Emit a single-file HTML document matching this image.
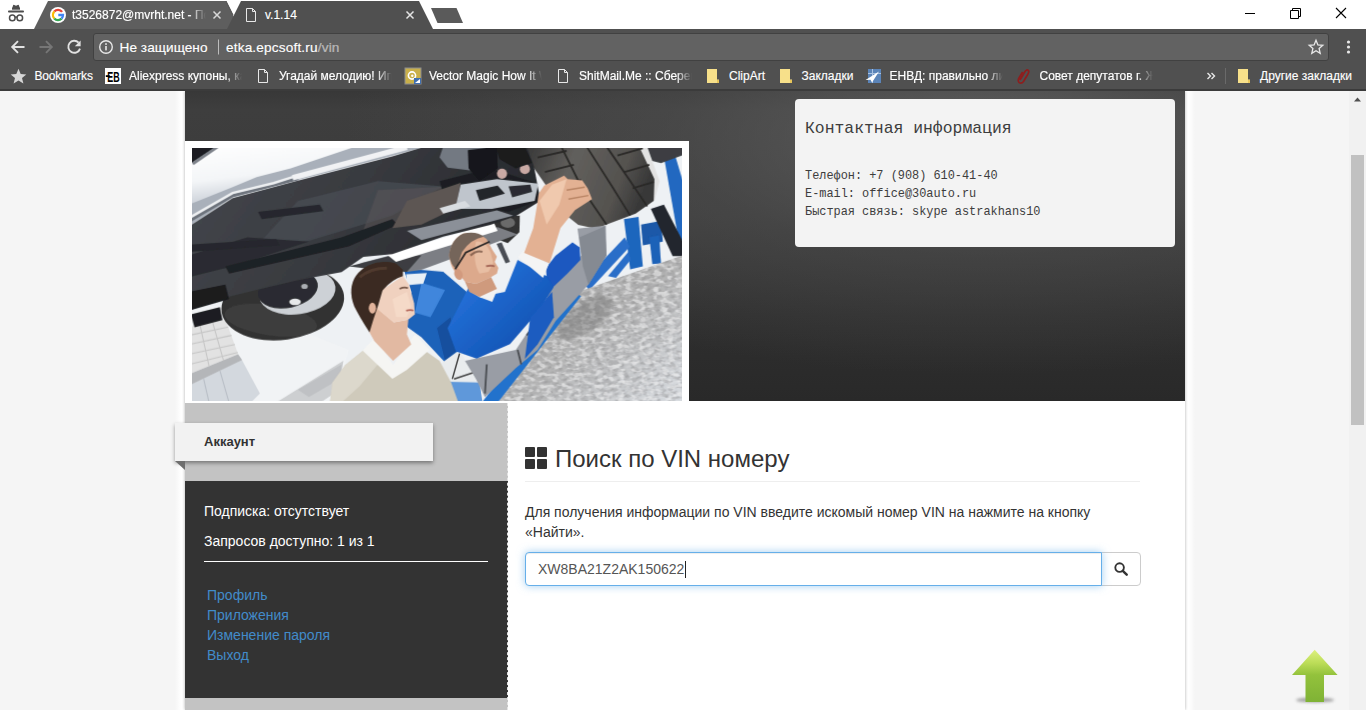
<!DOCTYPE html>
<html lang="ru">
<head>
<meta charset="utf-8">
<title>v.1.14</title>
<style>
*{box-sizing:border-box;margin:0;padding:0}
html,body{width:1366px;height:710px;overflow:hidden;background:#f5f5f5;font-family:"Liberation Sans",sans-serif;}
.abs{position:absolute}
#chrome{position:absolute;left:0;top:0;width:1366px;height:91px;background:#fff;z-index:50;overflow:hidden}
#toolbar{position:absolute;left:0;top:29px;width:1366px;height:61px;background:#505050}
#chromeborder{position:absolute;left:0;top:89px;width:1366px;height:2px;background:#3b3b3b}
#urlbox{position:absolute;left:93px;top:33px;width:1236px;height:28px;background:#626262;border:1px solid #414141;border-radius:3px}
.ct{position:absolute;color:#fff;-webkit-text-stroke:.2px rgba(255,255,255,.85);font-size:12px;line-height:16px;white-space:nowrap;font-family:"Liberation Sans",sans-serif}
.bm{top:68px}
.fade{width:113px;overflow:hidden;-webkit-mask-image:linear-gradient(90deg,#000 86%,transparent 100%);mask-image:linear-gradient(90deg,#000 86%,transparent 100%)}
#ph{position:absolute;left:7px;top:7px;display:block}
#page{position:absolute;left:0;top:91px;width:1349px;height:619px;background:#f5f5f5;overflow:hidden}
#scroll{position:absolute;left:1349px;top:91px;width:17px;height:619px;background:#f1f1f1}
#thumb{position:absolute;left:2px;top:64px;width:13px;height:270px;background:#c1c1c1}
#glow{position:absolute;left:175px;top:0;width:1020px;height:619px;background:linear-gradient(90deg,rgba(255,255,255,0) 0,#fff 6px,#fff 1014px,rgba(255,255,255,0) 1020px)}
#wrap{position:absolute;left:185px;top:0;width:1000px;height:619px;background:#fff;box-shadow:0 0 3px rgba(0,0,0,.32)}
#header{position:absolute;left:0;top:0;width:1000px;height:310px;background:radial-gradient(ellipse 640px 240px at 80% 14%,rgba(100,100,100,.8) 0%,rgba(84,84,84,.42) 50%,rgba(60,60,60,0) 100%),linear-gradient(180deg,#383838 0%,#3e3e3e 6%,#3b3b3b 40%,#2f2f2f 72%,#292929 100%)}
#contact{position:absolute;left:610px;top:8px;width:380px;height:148px;background:#f3f3f3;border-radius:4px;font-family:"Liberation Mono",monospace;color:#3d3d3d}
#contact h3{position:absolute;left:10px;top:18px;font-weight:normal;font-size:16.4px;line-height:24px;white-space:nowrap}
#contact p{position:absolute;left:10px;font-size:11.9px;line-height:18px;white-space:nowrap}
#photo{position:absolute;left:0;top:50px;width:504px;height:262px;background:#fff;z-index:2}
#side{position:absolute;left:0;top:312px;width:323px;height:307px;background:#c3c3c3}
#dash{position:absolute;left:322px;top:312px;width:0;height:307px;border-left:1px dashed #e4e4e4;z-index:3}
#sidedark{position:absolute;left:0;top:78px;width:323px;height:217px;background:#333}
#ribbon{position:absolute;left:-10px;top:20px;width:258px;height:38px;background:#f2f2f2;box-shadow:0 2px 4px rgba(0,0,0,.4)}
#ribbon b{position:absolute;left:29px;top:11px;font-size:13px;line-height:16px;color:#333}
#fold{position:absolute;left:-10px;top:58px;width:0;height:0;border-top:9px solid #6e6e6e;border-left:10px solid transparent}
.sw{position:absolute;left:19px;color:#fff;font-size:14px;line-height:20px;white-space:nowrap}
.sl{position:absolute;left:22px;color:#428bca;font-size:14px;line-height:20px;white-space:nowrap}
#main{position:absolute;left:323px;top:310px;width:677px;height:309px;background:#fff}
#h2{position:absolute;left:47px;top:44px;font-size:24px;line-height:28px;color:#333;white-space:nowrap}
#hr{position:absolute;left:17px;top:80px;width:615px;height:1px;background:#eee}
#desc{position:absolute;left:17px;top:101px;width:620px;font-size:14px;line-height:20px;color:#333;letter-spacing:0}
#inp{z-index:2;background:#fff;position:absolute;left:17px;top:151px;width:577px;height:34px;border:1px solid #66afe9;border-radius:4px 0 0 4px;box-shadow:inset 0 1px 1px rgba(0,0,0,.075),0 0 8px rgba(102,175,233,.6);font-size:14px;line-height:32px;padding-left:12px;color:#555}
#btn{position:absolute;left:593px;top:151px;width:40px;height:34px;border:1px solid #ccc;border-radius:0 4px 4px 0;background:#fff}
</style>
</head>
<body>
<div id="page">
  <div id="glow"></div>
  <div id="wrap">
    <div id="header">
      <div id="photo"><svg id="ph" width="490" height="253" viewBox="0 0 1366 705" preserveAspectRatio="none">
<defs>
<linearGradient id="gSil" x1="0" y1="0" x2="0.35" y2="1"><stop offset="0" stop-color="#ffffff"/><stop offset="0.55" stop-color="#f4f6f8"/><stop offset="0.85" stop-color="#d2d7de"/><stop offset="1" stop-color="#a9b0ba"/></linearGradient>
<linearGradient id="gUnder" x1="0" y1="0" x2="1" y2="0.3"><stop offset="0" stop-color="#45484d"/><stop offset="0.5" stop-color="#393b40"/><stop offset="1" stop-color="#26282c"/></linearGradient>
<linearGradient id="gTire" x1="0" y1="0" x2="1" y2="0.25"><stop offset="0" stop-color="#343434"/><stop offset="0.4" stop-color="#62605d"/><stop offset="0.8" stop-color="#54524f"/><stop offset="1" stop-color="#383838"/></linearGradient>
<linearGradient id="gPlate" x1="0" y1="0" x2="1" y2="1"><stop offset="0" stop-color="#9c9c9c"/><stop offset="0.5" stop-color="#b2b2b2"/><stop offset="1" stop-color="#d9dde2"/></linearGradient>
<linearGradient id="gBlue" x1="0" y1="0" x2="1" y2="1"><stop offset="0" stop-color="#2a7be6"/><stop offset="1" stop-color="#0d4aa8"/></linearGradient>
<filter id="soft" x="-5%" y="-5%" width="110%" height="110%"><feGaussianBlur stdDeviation="1.6"/></filter>
<filter id="soft4" x="-20%" y="-20%" width="140%" height="140%"><feGaussianBlur stdDeviation="5"/></filter>
<pattern id="pDia" width="26" height="16" patternUnits="userSpaceOnUse" patternTransform="rotate(-25)"><rect width="26" height="16" fill="none"/><rect x="2" y="2" width="14" height="5" fill="#e8e8e8"/><rect x="14" y="9" width="10" height="5" fill="#6f6f6f"/></pattern><filter id="noise" x="0" y="0" width="100%" height="100%"><feTurbulence type="fractalNoise" baseFrequency="0.05 0.09" numOctaves="2" seed="7" result="n"/><feColorMatrix in="n" type="matrix" values="0 0 0 0 0.35  0 0 0 0 0.35  0 0 0 0 0.36  5 0 0 0 -2.3"/></filter><filter id="noise2" x="0" y="0" width="100%" height="100%"><feTurbulence type="fractalNoise" baseFrequency="0.05 0.09" numOctaves="2" seed="23" result="n"/><feColorMatrix in="n" type="matrix" values="0 0 0 0 0.93  0 0 0 0 0.93  0 0 0 0 0.94  5 0 0 0 -2.4"/></filter><clipPath id="cpPlate"><polygon points="1366,298 1366,705 850,705 1066,402"/></clipPath><clipPath id="cp"><rect x="0" y="0" width="1366" height="705"/></clipPath>
</defs>
<g clip-path="url(#cp)">
<rect width="1366" height="705" fill="#eef1f4"/>
<g filter="url(#soft)" transform="translate(683 352.5) scale(1.012) translate(-683 -352.5)">
<!-- BG -->
<!-- bottom-left wall -->
<polygon points="0,440 140,440 440,560 400,705 0,705" fill="#f1f3f5"/>
<polygon points="0,657 145,587 195,680 170,705 0,705" fill="#d3d8de"/>
<path d="M40,640 L55,705 M85,618 L110,705" stroke="#b9bfc7" stroke-width="3" fill="none"/>
<polygon points="0,497 100,477 135,572 0,627" fill="#e2e2e2"/>
<polygon points="0,627 135,572 146,588 0,658" fill="#b4b6b9"/>
<path d="M0,520 L108,497 M0,545 L117,520 M0,572 L126,545 M0,600 L134,567 M30,492 L55,605 M65,485 L95,590" stroke="#c6c6c6" stroke-width="3" fill="none"/>
<polygon points="240,705 425,590 412,672 362,705" fill="#cdcfd1"/>
<polygon points="300,670 420,600 415,640 330,690" fill="#bfc1c4"/>
<!-- blue lift between men -->
<polygon points="590,335 700,345 770,405 730,480 745,560 715,605 640,525 598,495 612,400" fill="#1d62b9"/>
<polygon points="640,375 705,395 665,470 622,458" fill="#3f86dc"/>
<polygon points="598,352 655,348 645,378 600,382" fill="#eaf0f6"/>
<polygon points="683,500 720,470 740,560 705,590" fill="#164f9e"/>
<polygon points="690,600 745,560 790,640 812,705 725,705" fill="#e9ecee"/>
<polygon points="712,648 800,650 808,705 735,705" fill="#5f98da"/>
<path d="M745,570 L725,640 M730,640 L790,620" stroke="#444" stroke-width="4" fill="none"/>
<!-- front wheel -->
<ellipse cx="258" cy="432" rx="170" ry="100" transform="rotate(-8 258 432)" fill="#333333"/>
<ellipse cx="225" cy="478" rx="128" ry="42" transform="rotate(8 225 478)" fill="#464646" opacity=".6"/>
<ellipse cx="298" cy="400" rx="106" ry="62" transform="rotate(-8 298 400)" fill="#cdd1d6"/>
<ellipse cx="272" cy="394" rx="84" ry="50" transform="rotate(-12 272 394)" fill="#2b2c30"/>
<ellipse cx="292" cy="428" rx="16" ry="9" fill="#e6e8ea"/><ellipse cx="318" cy="385" rx="9" ry="7" fill="#a9adb2"/><ellipse cx="300" cy="360" rx="8" ry="6" fill="#8d9095"/>
<!-- right bg blue lift posts -->
<polygon points="1198,200 1238,194 1250,330 1215,338" fill="#1f66bd"/>
<polygon points="1245,215 1300,205 1305,262 1250,272" fill="#1a58a8"/>
<polygon points="1268,250 1295,245 1300,322 1276,324" fill="#1f62b8"/>
<polygon points="1308,28 1338,22 1366,115 1366,262 1348,255" fill="#2168c0"/>
<polygon points="1272,172 1308,160 1366,272 1366,302 1332,302" fill="#23272f"/>
<polygon points="1085,372 1200,250 1214,276 1102,396" fill="#2a6ec8"/>
<polygon points="1154,357 1210,290 1216,312 1176,362" fill="#2a6ec8"/>
<!-- top right dark -->
<polygon points="1255,0 1366,0 1366,22 1300,46 1270,38" fill="#3c3e42"/>
<!-- rim of rear wheel -->
<polygon points="1215,0 1262,0 1296,95 1282,150" fill="#e2e2e2"/>
<!-- rear tire -->
<polygon points="916,0 1240,0 1282,90 1280,150 1230,185 1120,226 1072,216 1040,190 985,110 940,45" fill="url(#gTire)"/>
<g stroke="#2b2a28" stroke-width="5" fill="none">
<path d="M1025,0 L1085,120 L1150,215"/><path d="M1095,0 L1165,110 L1215,190"/><path d="M1150,0 L1215,95 L1262,165"/>
<path d="M960,30 L1040,12 M980,70 L1060,50 M1000,110 L1080,92 M1180,25 L1250,5 M1200,70 L1268,50 M1222,115 L1280,98"/>
</g>
<!-- small far wheel -->
<polygon points="822,196 911,190 910,236 878,266 829,248" fill="#303030"/>
<ellipse cx="878" cy="210" rx="20" ry="14" fill="#6a6a6a"/>
<!-- white strip & gray sill under car -->
<polygon points="470,322 850,222 905,242 640,340 600,345" fill="#7b7e84"/>
<polygon points="440,330 560,300 640,300 600,345 520,340" fill="#3c3e42"/>
<polygon points="545,298 840,210 850,232 570,318" fill="#ffffff"/>
<!-- silver body -->
<polygon points="0,0 650,0 560,25 300,92 120,140 0,220" fill="#a9b0ba"/>
<polygon points="0,0 458,0 280,60 186,84 120,112 0,160" fill="url(#gSil)"/>
<path d="M0,205 L120,135 L300,88" stroke="#6d737c" stroke-width="9" fill="none"/>
<path d="M285,86 L600,2" stroke="#f1f2f4" stroke-width="15" fill="none"/>
<path d="M0,197 L120,128 L233,101 L286,84" stroke="#eef0f2" stroke-width="7" fill="none"/>
<polygon points="0,0 75,0 0,50" fill="#1b1d22"/>
<path d="M10,48 L80,0" stroke="#7d828a" stroke-width="8" fill="none"/>
<!-- underbody -->
<polygon points="0,220 120,142 300,94 560,27 650,0 930,0 950,55 968,150 900,192 830,216 700,248 560,296 480,304 420,346 300,368 180,396 90,418 0,452" fill="url(#gUnder)"/>
<polygon points="300,150 520,95 700,110 560,190 330,260 180,280" fill="#474b53" opacity=".8"/>
<polygon points="520,120 720,110 760,160 600,215 480,230" fill="#5a5557" opacity=".55"/>
<polygon points="0,300 160,250 330,262 120,330 0,360" fill="#2a2c31"/>
<polygon points="190,180 360,160 370,178 200,200" fill="#26282d"/>
<polygon points="0,270 240,255 250,272 0,290" fill="#26282d"/>
<polygon points="100,330 420,250 560,200 575,215 440,275 110,350" fill="#1f2125"/>
<polygon points="0,400 100,380 110,420 0,452" fill="#1a1b1e"/>
<polygon points="5,462 85,442 92,478 15,498" fill="#1e1f22"/>
<!-- suspension bits -->
<polygon points="700,0 848,0 808,40 773,66 712,58 690,30" fill="#737982"/>
<polygon points="690,95 830,60 955,100 960,150 880,180 760,160 700,130" fill="#1d1f23"/>
<polygon points="768,10 848,0 850,60 800,95 770,60" fill="#15161a"/>
<polygon points="600,150 748,100 735,170 640,215 560,225" fill="#5d5653"/>
<polygon points="748,105 848,90 962,102 952,150 835,172 733,172" fill="#bfc5cc"/>
<polygon points="790,120 850,108 870,130 800,150" fill="#24262a"/>
<polygon points="880,110 940,105 945,125 890,140" fill="#2a2c31"/>
<polygon points="600,232 848,176 893,190 640,258" fill="#8b9098"/>
<polygon points="690,170 760,150 775,165 700,185" fill="#d8dce0"/>
<circle cx="862" cy="75" r="14" fill="#c9a9a4"/><circle cx="925" cy="62" r="14" fill="#c9a9a4"/>
<polygon points="845,0 925,0 945,45 900,60 855,35" fill="#1a1b1e"/>
<!-- diamond plate -->
<polygon points="1366,298 1366,705 850,705 1066,402" fill="url(#gPlate)"/>
<polygon points="1366,298 1366,705 850,705 1066,402" fill="url(#pDia)" opacity=".28"/>
<g clip-path="url(#cpPlate)"><rect x="840" y="290" width="530" height="420" filter="url(#noise)" opacity=".45"/><rect x="840" y="290" width="530" height="420" filter="url(#noise2)" opacity=".5"/></g>
<ellipse cx="1090" cy="470" rx="90" ry="40" transform="rotate(-35 1090 470)" fill="#777" opacity=".45" filter="url(#soft4)"/>
<!-- blue ramp edge -->
<polygon points="1035,417 1064,404 1080,412 850,705 806,705" fill="#2272cc"/>
<!-- mechanic overalls -->
<polygon points="1000,385 1040,350 1080,300 1070,226 1148,218 1150,300 1100,380 1010,480 960,560 900,610 815,690 790,640 760,590 900,560 960,470" fill="#999da5"/>
<polygon points="1075,250 1145,220 1150,300 1100,380 1085,330" fill="#858a92"/>
<path d="M960,480 L930,520 M905,560 L915,600 M820,600 L815,680" stroke="#4a4d52" stroke-width="5" fill="none"/>
<!-- mechanic jacket -->
<polygon points="712,500 770,388 800,415 870,400 905,312 990,360 1004,388 962,454 884,544 792,584 735,564" fill="url(#gBlue)"/>
<polygon points="985,358 983,335 1009,301 1056,264 1076,278 1078,312 1042,350 1002,388" fill="#1a58c0"/>
<polygon points="940,470 1000,400 1005,470 960,545 925,585" fill="#1a5cc0"/>
<!-- cuff -->
<polygon points="906,304 925,283 990,326 975,362" fill="#f4f4f4"/>
<!-- arm & hand -->
<polygon points="978,108 1033,80 1043,90 1083,93 1098,115 1110,145 1063,175 1043,200 1023,225 993,322 923,293 948,225 958,165 963,130" fill="#e3b193"/>
<polygon points="965,150 1000,105 1040,90 1020,160 985,215" fill="#f0c9ae"/>
<path d="M1040,120 L1090,112 M1045,145 L1100,135" stroke="#b98565" stroke-width="4" fill="none"/>
<!-- mechanic tshirt -->
<polygon points="775,400 850,392 835,428 800,415" fill="#f2f2f2"/>
<!-- mechanic head -->
<polygon points="847,268 861,264 884,318 872,322" fill="#4a4e55"/>
<path d="M755,240 Q790,232 819,254 L836,285 L848,303 L842,318 L852,334 L848,350 L828,362 L790,378 L760,372 L745,353 Q722,345 716,300 Q722,255 755,240 Z" fill="#dca98c"/>
<path d="M790,262 Q815,258 830,290 L838,320 L825,345 L800,350 Q780,320 790,262 Z" fill="#ebc3a9" opacity=".8"/>
<polygon points="760,372 790,378 832,360 848,392 800,414 772,400" fill="#cf9a7d"/>
<path d="M716,300 Q722,255 755,240 Q790,232 812,248 Q775,255 752,290 L736,336 Q722,330 716,300 Z" fill="#75655a"/>
<ellipse cx="742" cy="352" rx="11" ry="16" transform="rotate(-20 742 352)" fill="#d29a7e"/>
<path d="M733,338 L762,292 L828,262" stroke="#2a2626" stroke-width="5" fill="none"/>
<path d="M775,300 Q792,285 808,290" stroke="#6b4a3a" stroke-width="6" fill="none" opacity=".7"/>
<path d="M818,330 Q832,326 842,330" stroke="#a86a5a" stroke-width="5" fill="none"/>
<!-- customer -->
<polygon points="388,705 395,650 430,602 482,560 560,612 640,555 690,590 722,650 742,705" fill="#cfcabb"/>
<polygon points="430,602 482,560 520,600 470,660 420,705 388,705 395,650" fill="#dcd8cc"/>
<polygon points="478,562 512,526 562,602 622,518 662,560 600,615 560,640" fill="#f5f5f3"/>
<polygon points="497,512 512,440 564,484 604,477 600,517 612,545 562,590 510,535" fill="#e2b9a2"/>
<polygon points="533,394 589,356 606,380 612,402 620,432 622,462 604,477 564,484 518,447" fill="#f0d1bf"/>
<polygon points="560,420 600,400 612,440 600,470 570,470" fill="#f6dccb" opacity=".8"/>
<path d="M447,393 Q450,350 494,327 Q530,312 570,322 L589,340 L589,357 Q560,365 533,396 L520,440 L508,475 L497,512 Q470,470 455,440 Q445,415 447,393 Z" fill="#3b2a21"/>
<path d="M470,360 Q500,335 545,335" stroke="#5a4234" stroke-width="8" fill="none" opacity=".7"/>
<ellipse cx="505" cy="445" rx="10" ry="15" fill="#e2b49c"/>
<path d="M580,392 Q592,386 603,390" stroke="#5a3a2c" stroke-width="5" fill="none" opacity=".8"/>
<path d="M598,452 Q610,448 618,452" stroke="#b66a5e" stroke-width="5" fill="none"/>

</g>
</g>
</svg>
</div>
      <div id="contact">
        <h3>Контактная информация</h3>
        <p style="top:68px">Телефон: +7 (908) 610-41-40</p>
        <p style="top:86px">E-mail: office@30auto.ru</p>
        <p style="top:104px">Быстрая связь: skype astrakhans10</p>
      </div>
    </div>
    <div id="side">
      <div id="sidedark">
        <div class="sw" style="top:20px">Подписка: отсутствует</div>
        <div class="sw" style="top:50px">Запросов доступно: 1 из 1</div>
        <div class="abs" style="left:19px;top:80px;width:284px;height:1px;background:#fff"></div>
        <div class="sl" style="top:104px">Профиль</div>
        <div class="sl" style="top:124px">Приложения</div>
        <div class="sl" style="top:144px">Изменение пароля</div>
        <div class="sl" style="top:164px">Выход</div>
      </div>
      <div id="ribbon"><b>Аккаунт</b></div>
      <div id="fold"></div>
    </div>
    <div id="dash"></div>
    <div id="main">
      <svg class="abs" style="left:17px;top:46px" width="22" height="22" viewBox="0 0 22 22"><g fill="#333"><rect x="0" y="0" width="10" height="10" rx="1"/><rect x="12" y="0" width="10" height="10" rx="1"/><rect x="0" y="12" width="10" height="10" rx="1"/><rect x="12" y="12" width="10" height="10" rx="1"/></g></svg>
      <div id="h2">Поиск по VIN номеру</div>
      <div id="hr"></div>
      <div id="desc">Для получения информации по VIN введите искомый номер VIN на нажмите на кнопку «Найти».</div>
      <div id="inp">XW8BA21Z2AK150622<span style="position:absolute;left:158.5px;top:8px;width:1px;height:17px;background:#222"></span></div>
      <div id="btn"><svg class="abs" style="left:12px;top:9px" width="14" height="14" viewBox="0 0 15 15"><circle cx="6" cy="6" r="4.6" fill="none" stroke="#333" stroke-width="2"/><path d="M9.4,9.4 L13.6,13.6" stroke="#333" stroke-width="2.6" stroke-linecap="round"/></svg></div>
    </div>
  </div>
  <svg class="abs" style="left:1285px;top:552px" width="60" height="66" viewBox="1285 643 60 66">
    <defs><linearGradient id="ga" x1="0" y1="0" x2="0" y2="1"><stop offset="0" stop-color="#ddf07e"/><stop offset=".25" stop-color="#bcdd58"/><stop offset=".48" stop-color="#93c23c"/><stop offset="1" stop-color="#7fb235"/></linearGradient>
    <filter id="fa" x="-30%" y="-100%" width="160%" height="300%"><feGaussianBlur stdDeviation="1.6"/></filter></defs>
    <ellipse cx="1315" cy="700" rx="19" ry="2.6" fill="#6b6b6b" opacity=".6" filter="url(#fa)"/>
    <path d="M1314.7,649.8 L1337.6,675 L1324,675 L1324,702 L1305.5,702 L1305.5,675 L1292,675 Z" fill="url(#ga)"/>
  </svg>
</div>
<div id="scroll"><div id="thumb"></div>
<svg class="abs" style="left:0;top:0" width="17" height="17" viewBox="0 0 17 17"><path d="M5,10.5 L8.5,6.5 L12,10.5 Z" fill="#505050"/></svg>
</div>
<div id="chrome">
  <div id="toolbar"></div>
  <svg class="abs" style="left:0;top:0" width="1366" height="30" viewBox="0 0 1366 30">
    <!-- inactive tab -->
    <polygon points="48,1 226,1 240,29 34,29" fill="#5e5e5e"/>
    <!-- active tab -->
    <polygon points="241,1 419,1 433,29 227,29" fill="#505050"/>
    <line x1="226" y1="1" x2="233" y2="15" stroke="#4a4a4a" stroke-width="1"/>
    <!-- new tab button -->
    <polygon points="431,8 456.5,8 463,23 437.5,23" fill="#5a5a5a"/>
    <!-- incognito icon -->
    <g fill="#4d4d4d">
      <path d="M12,9.2 L13,5.4 Q13.4,4.6 14.3,5 L16,5.8 L17.7,5 Q18.6,4.6 19,5.4 L20,9.2 Z"/>
      <rect x="12" y="7.6" width="8" height="2"/>
      <rect x="8" y="10.6" width="16" height="1.9" rx=".9"/>
    </g>
    <g fill="none" stroke="#4d4d4d" stroke-width="1.5">
      <circle cx="12.3" cy="17.9" r="2.8"/><circle cx="19.8" cy="17.9" r="2.8"/><path d="M15,17.3 Q16,16.5 17.1,17.3"/>
    </g>
    <!-- google favicon -->
    <circle cx="58" cy="15" r="8" fill="#fff"/>
    <g fill="none" stroke-width="2.3">
      <path d="M62.1,11.9 A5,5 0 0 0 54.3,11.6" stroke="#ea4335"/>
      <path d="M54.3,11.6 A5,5 0 0 0 54.3,18.4" stroke="#fbbc05"/>
      <path d="M54.3,18.4 A5,5 0 0 0 61.6,18.6" stroke="#34a853"/>
      <path d="M61.6,18.6 A5,5 0 0 0 63,15 L58.3,15" stroke="#4285f4"/>
    </g>
    <!-- close x tab1 -->
    <path d="M213.5,11.5 L220.5,18.5 M220.5,11.5 L213.5,18.5" stroke="#d8d8d8" stroke-width="1.5" fill="none"/>
    <!-- doc icon tab2 -->
    <path d="M246.5,8.5 H252.5 L255.5,11.5 V21.5 H246.5 Z M252.5,8.5 V11.5 H255.5" fill="none" stroke="#e8e8e8" stroke-width="1"/>
    <!-- close x tab2 -->
    <path d="M406.5,11.5 L413.5,18.5 M413.5,11.5 L406.5,18.5" stroke="#e4e4e4" stroke-width="1.5" fill="none"/>
    <!-- window controls -->
    <path d="M1245,13.5 H1255" stroke="#000" stroke-width="1"/>
    <path d="M1290.5,10.5 H1298.5 V18.5 H1290.5 Z M1292.5,10.5 V8.5 H1300.5 V16.5 H1298.5" fill="none" stroke="#000" stroke-width="1"/>
    <path d="M1336,8 L1346,18 M1346,8 L1336,18" stroke="#000" stroke-width="1.1"/>
  </svg>
  <div class="ct" id="t1" style="left:72px;top:7px;width:134px;overflow:hidden;-webkit-mask-image:linear-gradient(90deg,#000 88%,transparent 100%);mask-image:linear-gradient(90deg,#000 88%,transparent 100%)">t3526872@mvrht.net - Пол</div>
  <div class="ct" id="t2" style="left:265px;top:7px">v.1.14</div>
  <div id="urlbox"></div>
  <svg class="abs" style="left:0;top:30px" width="1366" height="60" viewBox="0 30 1366 60">
    <!-- back -->
    <path d="M24.5,47 H12.5 M18,41.2 L12.2,47 L18,52.8" fill="none" stroke="#e2e2e2" stroke-width="1.9"/>
    <!-- forward -->
    <path d="M39.5,47 H51.5 M46,41.2 L51.8,47 L46,52.8" fill="none" stroke="#767676" stroke-width="1.9"/>
    <!-- reload -->
    <path d="M78.6,42.6 A6,6 0 1 0 80,48.6" fill="none" stroke="#e2e2e2" stroke-width="1.9"/>
    <path d="M80.6,40.4 V46.2 H74.8 Z" fill="#e2e2e2"/>
    <!-- info -->
    <circle cx="106" cy="47" r="6.3" fill="none" stroke="#e8e8e8" stroke-width="1.4"/>
    <rect x="105.2" y="46" width="1.6" height="4.4" fill="#e8e8e8"/><rect x="105.2" y="43.2" width="1.6" height="1.7" fill="#e8e8e8"/>
    <line x1="218.5" y1="39.5" x2="218.5" y2="54.5" stroke="#bdbdbd" stroke-width="1"/>
    <!-- star -->
    <path d="M1316,40.3 L1317.9,44.9 L1322.8,45.3 L1319.1,48.5 L1320.2,53.3 L1316,50.8 L1311.8,53.3 L1312.9,48.5 L1309.2,45.3 L1314.1,44.9 Z" fill="none" stroke="#e8e8e8" stroke-width="1.3" stroke-linejoin="miter"/>
    <!-- menu -->
    <circle cx="1348.5" cy="42" r="1.6" fill="#e8e8e8"/><circle cx="1348.5" cy="47" r="1.6" fill="#e8e8e8"/><circle cx="1348.5" cy="52" r="1.6" fill="#e8e8e8"/>
    <!-- bookmarks star -->
    <path d="M18.5,68.8 L20.7,74 L26.3,74.4 L22,78 L23.4,83.5 L18.5,80.5 L13.6,83.5 L15,78 L10.7,74.4 L16.3,74 Z" fill="#d6d6d6"/>
    <!-- EB icon -->
    <rect x="105" y="68" width="16" height="16" fill="#fff"/>
    <text x="107.3" y="81.7" font-family="Liberation Sans, sans-serif" font-weight="bold" font-size="15.2" fill="#000" textLength="12.4" lengthAdjust="spacingAndGlyphs">EB</text>
    <rect x="105.8" y="75.2" width="4" height="1.8" fill="#000"/>
    <!-- doc icons -->
    <path id="doc1" d="M258.5,69.5 H264.5 L267.5,72.5 V82.5 H258.5 Z M264.5,69.5 V72.5 H267.5" fill="none" stroke="#e8e8e8" stroke-width="1"/>
    <path d="M558.5,69.5 H564.5 L567.5,72.5 V82.5 H558.5 Z M564.5,69.5 V72.5 H567.5" fill="none" stroke="#e8e8e8" stroke-width="1"/>
    <!-- vector magic icon -->
    <rect x="405" y="68" width="16" height="16" fill="#c9b04a"/>
    <rect x="405" y="68" width="16" height="16" fill="none" stroke="#8d8d8d" stroke-width="1"/>
    <circle cx="412" cy="75.5" r="3.6" fill="none" stroke="#fff" stroke-width="1.6"/>
    <circle cx="412.3" cy="75.8" r="1.2" fill="#fff"/>
    <rect x="414" y="78" width="7" height="6" fill="#3f6fb0"/>
    <path d="M415,83 L420,79 L420,83 Z" fill="#fff"/>
    <!-- folders -->
    <g fill="#f7e08a">
      <path d="M707,69 H717 V79.5 H719 V83 H707 Z"/>
      <path d="M780,69 H790 V79.5 H792 V83 H780 Z"/>
      <path d="M1238,69 H1248 V79.5 H1250 V83 H1238 Z"/>
    </g>
    <g fill="#e8c65a"><rect x="717" y="80" width="2" height="3"/><rect x="790" y="80" width="2" height="3"/><rect x="1248" y="80" width="2" height="3"/></g>
    <!-- envd icon -->
    <rect x="868" y="69" width="13" height="14" fill="#5b84b8"/>
    <path d="M868,73.5 H881 M872.5,69 V83" stroke="#a9c1e0" stroke-width="1"/>
    <path d="M865.5,80 L879,71.5 L872,82.5 L870.5,79.8 Z" fill="#fff"/>
    <!-- clip icon -->
    <path d="M1020,80 L1025,71.5 Q1026.8,69 1028.2,70.4 Q1029.4,71.8 1028,74 L1023.5,81.5 Q1021.5,84.2 1019.3,82.6 Q1017.4,80.8 1019,78 L1022.6,72" fill="none" stroke="#8f1d1d" stroke-width="1.7"/>
    <!-- overflow chevrons -->
    <path d="M1207.5,73 L1210.5,76 L1207.5,79 M1211.5,73 L1214.5,76 L1211.5,79" fill="none" stroke="#e8e8e8" stroke-width="1.4"/>
    <line x1="1225.5" y1="68" x2="1225.5" y2="84" stroke="#6a6a6a" stroke-width="1"/>
  </svg>
  <div class="ct" id="u1" style="left:119.5px;top:38.6px;font-size:13.6px;line-height:18px;letter-spacing:.06px">Не защищено</div>
  <div class="ct" id="u2" style="left:226px;top:38.6px;font-size:13.6px;line-height:18px;letter-spacing:.17px">etka.epcsoft.ru<span style="color:#a8a8a8">/vin</span></div>
  <div class="ct bm" id="b0" style="left:34.5px;letter-spacing:-.2px">Bookmarks</div>
  <div class="ct bm fade" id="b1" style="left:129px">Aliexpress купоны, ка</div>
  <div class="ct bm fade" id="b2" style="left:279px">Угадай мелодию! Игр</div>
  <div class="ct bm fade" id="b3" style="left:429px">Vector Magic How It W</div>
  <div class="ct bm fade" id="b4" style="left:579px">ShitMail.Me :: Сберег</div>
  <div class="ct bm" id="b5" style="left:729px">ClipArt</div>
  <div class="ct bm" id="b6" style="left:801.5px">Закладки</div>
  <div class="ct bm fade" id="b7" style="left:889.5px">ЕНВД: правильно ли</div>
  <div class="ct bm fade" id="b8" style="left:1039.5px">Совет депутатов г. Ж</div>
  <div class="ct bm" id="b9" style="left:1260px">Другие закладки</div>
  <div id="chromeborder"></div>
</div>

</body>
</html>
